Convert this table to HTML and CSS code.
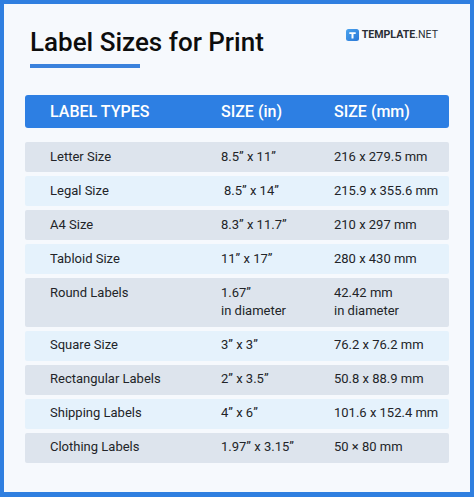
FILE: index.html
```html
<!DOCTYPE html>
<html>
<head>
<meta charset="utf-8">
<link rel="stylesheet" href="styles.css">
</head>
<body>
<div class="frame">
  <div class="top">
    <div class="title-wrap">
      <h1 class="title">Label Sizes for Print</h1>
      <div class="underline"></div>
    </div>
    <div class="logo">
      <svg class="logo-icon" width="13" height="12" viewBox="0 0 13 12">
        <defs>
          <linearGradient id="lg" x1="0" y1="0" x2="1" y2="1">
            <stop offset="0" stop-color="#4aa3ee"/>
            <stop offset="1" stop-color="#2b78d6"/>
          </linearGradient>
        </defs>
        <rect x="0" y="0" width="13" height="12" rx="2.5" fill="url(#lg)"/>
        <path d="M3.3 3.2h6.4v1.9H7.5v4.4H5.5V5.1H3.3z" fill="#fff"/>
      </svg>
      <span class="logo-text"><b>TEMPLATE</b>.NET</span>
    </div>
  </div>
  <div class="table">
    <div class="head">
      <span>LABEL TYPES</span><span>SIZE (in)</span><span>SIZE (mm)</span>
    </div>
    <div class="rows">
      <div class="row gray"><span>Letter Size</span><span>8.5” x 11”</span><span>216 x 279.5 mm</span></div>
      <div class="row light"><span>Legal Size</span><span class="indent">8.5” x 14”</span><span>215.9 x 355.6 mm</span></div>
      <div class="row gray"><span>A4 Size</span><span>8.3” x 11.7”</span><span>210 x 297 mm</span></div>
      <div class="row light"><span>Tabloid Size</span><span>11” x 17”</span><span>280 x 430 mm</span></div>
      <div class="row gray"><span>Round Labels</span><span>1.67”<br>in diameter</span><span>42.42 mm<br>in diameter</span></div>
      <div class="row light"><span>Square Size</span><span>3” x 3”</span><span>76.2 x 76.2 mm</span></div>
      <div class="row gray"><span>Rectangular Labels</span><span>2” x 3.5”</span><span>50.8 x 88.9 mm</span></div>
      <div class="row light"><span>Shipping Labels</span><span>4” x 6”</span><span>101.6 x 152.4 mm</span></div>
      <div class="row gray"><span>Clothing Labels</span><span>1.97” x 3.15”</span><span>50 × 80 mm</span></div>
    </div>
  </div>
</div>
</body>
</html>
```
FILE: styles.css
```css
html, body {
  margin: 0;
  padding: 0;
}
body {
  font-family: Roboto, "Liberation Sans", sans-serif;
  background: #f6f9fd;
}
.frame {
  box-sizing: border-box;
  width: 474px;
  height: 497px;
  border: 4px solid #2f7fe0;
  border-bottom-width: 5px;
  background: #f6f9fd;
  padding: 0 21px 0 21px;
}
.top {
  display: flex;
  justify-content: space-between;
  align-items: flex-start;
  padding-left: 5px;
}
.title {
  margin: 22.5px 0 0 0;
  font-size: 26px;
  line-height: 30px;
  font-weight: 500;
  color: #0d0d0d;
}
.underline {
  margin-top: 7.5px;
  width: 110px;
  height: 3.5px;
  background: #3a82dd;
}
.logo {
  display: flex;
  align-items: center;
  gap: 3px;
  margin-top: 24px;
  margin-right: 11px;
}
.logo-icon {
  display: block;
}
.logo-text {
  font-size: 10.6px;
  color: #2a2f36;
}
.logo-text b {
  font-weight: 700;
}
.table {
  margin-top: 27.5px;
}
.head {
  display: grid;
  grid-template-columns: 171px 113px 1fr;
  align-items: center;
  height: 33px;
  padding-left: 25px;
  background: #2d7fe3;
  border-radius: 3px;
  color: #fff;
  font-size: 16px;
  font-weight: 500;
}
.rows {
  margin-top: 14px;
  display: flex;
  flex-direction: column;
  gap: 4px;
}
.row {
  display: grid;
  grid-template-columns: 171px 113px 1fr;
  align-items: start;
  padding: 5.75px 0 5.75px 25px;
  font-size: 13px;
  line-height: 18.5px;
  color: #222428;
  border-radius: 2px;
}
.row.gray {
  background: #dde4ed;
}
.row.light {
  background: #e5f2fc;
}
.indent {
  padding-left: 3px;
}
```
